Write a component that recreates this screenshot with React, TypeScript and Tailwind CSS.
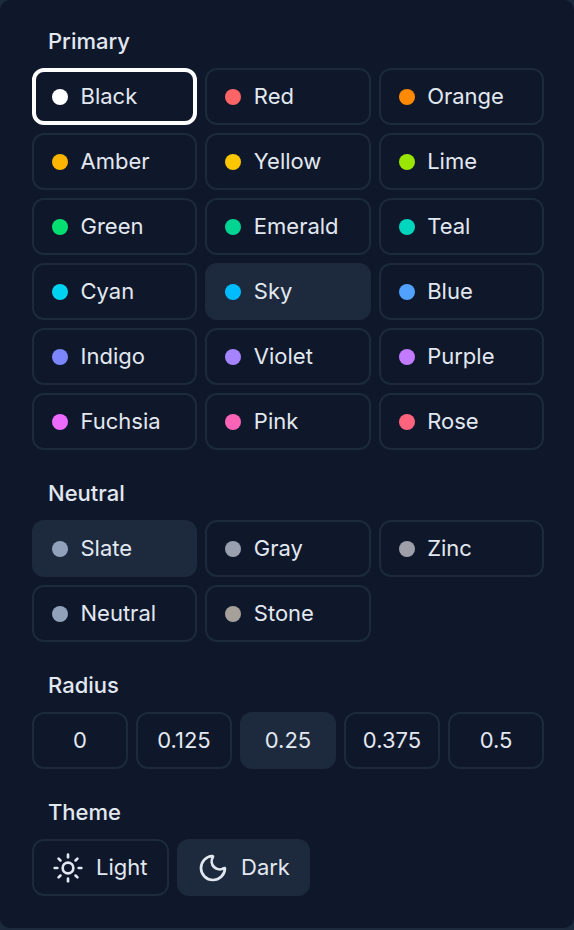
import { Moon, Sun } from "lucide-react";

const primary = [
  ["Black", "#ffffff"],
  ["Red", "#ff6467"],
  ["Orange", "#ff8a00"],
  ["Amber", "#fbb500"],
  ["Yellow", "#fdc700"],
  ["Lime", "#9ae600"],
  ["Green", "#05df72"],
  ["Emerald", "#00d492"],
  ["Teal", "#00d5be"],
  ["Cyan", "#00d3f2"],
  ["Sky", "#00bcff"],
  ["Blue", "#51a2ff"],
  ["Indigo", "#7c86ff"],
  ["Violet", "#a684ff"],
  ["Purple", "#c27aff"],
  ["Fuchsia", "#ed6aff"],
  ["Pink", "#fb64b6"],
  ["Rose", "#ff637e"],
];

const neutral = [
  ["Slate", "#90a1b9"],
  ["Gray", "#99a1af"],
  ["Zinc", "#9f9fa9"],
  ["Neutral", "#90a1b9"],
  ["Stone", "#a6a09b"],
];

const radius = ["0", "0.125", "0.25", "0.375", "0.5"];

function ColorButton({ name, color, hover, selected }: { name: string; color: string; hover?: boolean; selected?: boolean }) {
  return (
    <button
      className={`flex h-[57px] items-center gap-[12.5px] rounded-xl text-[22px] text-slate-200 ${
        selected
          ? "border-4 border-white pl-4"
          : hover
            ? "border-2 border-[#1d293d] bg-[#1d293d] pl-[18px]"
            : "border-2 border-[#1d293d] pl-[18px]"
      }`}
    >
      <span className="h-4 w-4 rounded-full" style={{ backgroundColor: color }} />
      {name}
    </button>
  );
}

function Label({ children }: { children: string }) {
  return <div className="ml-4 text-[22px] leading-7 font-medium text-slate-200">{children}</div>;
}

export default function App() {
  return (
    <div className="h-[930px] w-[574px] overflow-hidden bg-[#1d293d] font-['Inter',sans-serif] antialiased">
      <div className="-mx-[2px] -mt-[2px] h-[932px] rounded-xl border-2 border-[#1d293d] bg-[#0f172b] pt-[27px] pr-[30px] pl-8">
        <Label>Primary</Label>
        <div className="mt-[13px] grid grid-cols-3 gap-2">
          {primary.map(([name, color]) => (
            <ColorButton key={name} name={name} color={color} selected={name === "Black"} hover={name === "Sky"} />
          ))}
        </div>

        <div className="mt-[29px]">
          <Label>Neutral</Label>
        </div>
        <div className="mt-[13px] grid grid-cols-3 gap-2">
          {neutral.map(([name, color]) => (
            <ColorButton key={name} name={name} color={color} hover={name === "Slate"} />
          ))}
        </div>

        <div className="mt-[29px]">
          <Label>Radius</Label>
        </div>
        <div className="mt-[13px] grid grid-cols-5 gap-2">
          {radius.map((r) => (
            <button
              key={r}
              className={`flex h-[57px] items-center justify-center rounded-xl border-2 border-[#1d293d] text-[22px] text-slate-200 ${
                r === "0.25" ? "bg-[#1d293d]" : ""
              }`}
            >
              {r}
            </button>
          ))}
        </div>

        <div className="mt-[29px]">
          <Label>Theme</Label>
        </div>
        <div className="mt-[13px] flex gap-2">
          <button className="flex h-[57px] w-[137px] items-center gap-3 rounded-xl border-2 border-[#1d293d] pl-[18px] text-[22px] text-slate-200">
            <Sun className="h-8 w-8" strokeWidth={2} />
            Light
          </button>
          <button className="flex h-[57px] w-[133px] items-center gap-3 rounded-xl border-2 border-[#1d293d] bg-[#1d293d] pl-[18px] text-[22px] text-slate-200">
            <Moon className="h-8 w-8" strokeWidth={2} />
            Dark
          </button>
        </div>
      </div>
    </div>
  );
}
